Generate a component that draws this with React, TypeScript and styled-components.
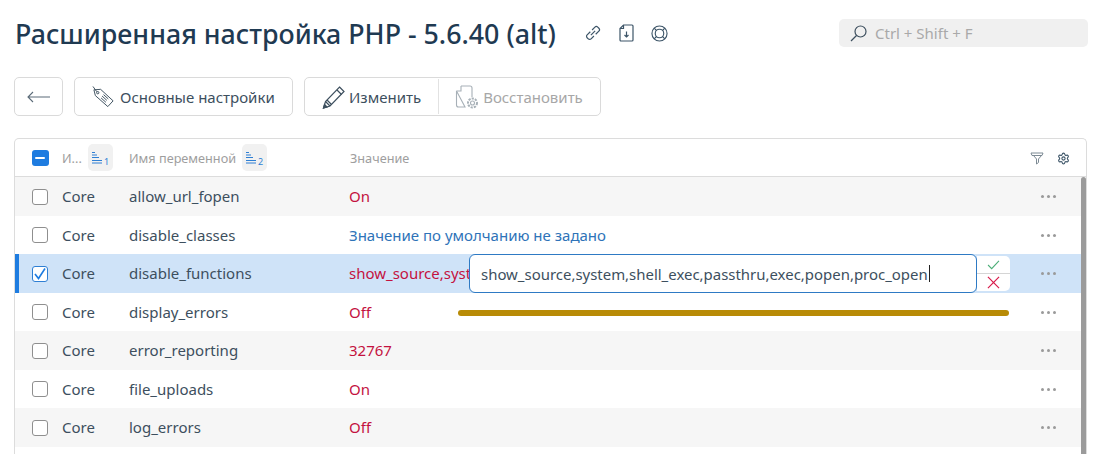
import React from "react";
import styled, { createGlobalStyle } from "styled-components";
import { Settings } from "lucide-react";

const Global = createGlobalStyle`
  html, body { margin: 0; padding: 0; height: 454px; overflow: hidden; background: #fff; }
  body { font-family: "Noto Sans", "Open Sans", "Liberation Sans", sans-serif; color: #344a5e; }
  * { box-sizing: border-box; }
`;
const Page = styled.div`
  width: 1097px; height: 454px; overflow: hidden; padding: 0 9px 0 14px;
  display: flex; flex-direction: column;
`;
const TitleRow = styled.div`
  flex: none; height: 66px; display: flex; align-items: center;
`;
const Title = styled.h1`
  margin: 0; font-size: 26.8px; font-weight: 500; color: #1f3a52; white-space: nowrap; width: 571px; padding-left: 1px;
`;
const TitleIcons = styled.div`
  display: flex; align-items: center; color: #3d5568;
`;
const DocIcon = styled.svg`
  margin-left: 18px;
`;
const RingIcon = styled.svg`
  margin-left: 17px;
`;
const Search = styled.div`
  margin-left: auto; width: 249px; height: 28px; background: #f0f0f0; border-radius: 5px;
  display: flex; align-items: center; gap: 7px; padding-left: 10px; color: #a9a9a9; font-size: 15px;
`;
const Toolbar = styled.div`
  flex: none; margin-top: 11px; height: 39px; display: flex; gap: 11px;
`;
const ButtonBox = styled.div`
  height: 39px; border: 1px solid #dadada; border-radius: 5px; background: #fff;
  display: flex; align-items: center; font-size: 15px; color: #3d4f5e;
`;
const BackBox = styled(ButtonBox)`
  width: 49px; justify-content: center;
`;
const SettingsBox = styled(ButtonBox)`
  width: 219px; padding-left: 17px; gap: 5px; white-space: nowrap;
`;
const EditBox = styled(ButtonBox)`
  width: 297px; padding-left: 17px;
`;
const PencilIcon = styled.svg`
  margin-right: 3px;
`;
const RestoreIcon = styled.svg`
  margin-right: 4px;
`;
const ActionLabel = styled.span<{ $off?: boolean }>`
  color: ${p => (p.$off ? "#a7a7a7" : "#3d4f5e")}; white-space: nowrap;
`;
const Divider = styled.div`
  width: 1px; height: 35px; background: #e2e2e2; margin: 0 16px 0 17px;
`;
const Table = styled.div`
  position: relative; margin-top: 22px; width: 1073px; flex: none; height: 316px;
  border: 1px solid #dcdcdc; border-bottom: 0; border-radius: 5px 5px 0 0; overflow: hidden;
`;
const cols = "grid-template-columns: 47px 67px 220px 1fr 70px;";
const Head = styled.div`
  height: 38px; display: grid; ${cols} align-items: center; border-bottom: 1px solid #dcdcdc;
  font-size: 12.7px; color: #9e9e9e;
`;
const HeadCell = styled.div`
  display: flex; align-items: center; gap: 6px; white-space: nowrap;
`;
const ValueHead = styled(HeadCell)`
  padding-left: 1px;
`;
const SortBadge = styled.div`
  width: 25px; height: 27px; border-radius: 5px; background: #f1f1f1; display: flex;
  align-items: center; justify-content: center; color: #2e7fd4;
`;
const HeadTools = styled.div`
  position: absolute; right: 16px; top: 11px; display: flex; gap: 13px; align-items: center; height: 16px;
`;
const Row = styled.div<{ $bg: string; $selected?: boolean }>`
  height: 38.5px; display: grid; ${cols} align-items: center; background: ${p => p.$bg};
  font-size: 15px; color: #3d4f5e; box-shadow: ${p => (p.$selected ? "inset 4px 0 0 #1e7ce0" : "none")};
  padding-right: 5px;
`;
const CheckCell = styled.div`
  display: flex; justify-content: center; padding-left: 3px;
`;
const RowCheck = styled(CheckCell)`
  margin-top: 1px;
`;
const Box = styled.div<{ $on?: boolean }>`
  width: 16px; height: 16px; border-radius: 3px; background: #fff;
  border: 1px solid ${p => (p.$on ? "#2e7fd4" : "#8f8f8f")};
  display: flex; align-items: center; justify-content: center;
`;
const MinusBox = styled.div`
  width: 17px; height: 16px; border-radius: 3px; background: #1e7ce0;
  display: flex; align-items: center; justify-content: center;
`;
const MinusBar = styled.div`
  width: 10px; height: 2px; background: #fff; border-radius: 1px;
`;
const Val = styled.div<{ $blue?: boolean }>`
  color: ${p => (p.$blue ? "#2e73b8" : "#c4123f")}; white-space: nowrap; overflow: hidden;
`;
const Dots = styled.div`
  display: flex; gap: 3px; justify-content: center; padding-left: 4px; margin-top: 1px;
`;
const Dot = styled.span`
  width: 3px; height: 3px; border-radius: 50%; background: #9a9a9a;
`;
const ScrollThumb = styled.div`
  position: absolute; right: 0; top: 38px; bottom: 0; width: 5px; background: #9b9b9b; border-radius: 3px 3px 0 0;
`;
const Editor = styled.div`
  position: absolute; left: 454px; top: 115px; width: 508px; height: 39px; background: #fff;
  border: 1px solid #2e7ac4; border-radius: 6px; display: flex; align-items: center;
  padding-left: 11px; font-size: 14.95px; color: #3d4f5e; white-space: nowrap;
`;
const Caret = styled.span`
  display: inline-block; width: 1px; height: 17px; background: #222; margin-left: 1px;
`;
const Confirm = styled.div`
  position: absolute; left: 962px; top: 117px; width: 33px; height: 35px; background: #fff;
  border-radius: 0 5px 5px 0; display: flex; flex-direction: column;
`;
const ConfirmCell = styled.div<{ $top?: boolean }>`
  flex: 1; display: flex; align-items: center; justify-content: center;
  border-bottom: ${p => (p.$top ? "1px solid #d5d5d5" : "0")};
`;
const GoldBar = styled.div`
  position: absolute; left: 443px; top: 171px; width: 551px; height: 6px; background: #b88b06; border-radius: 3px;
`;

const rows = [
  { name: "allow_url_fopen", val: "On", bg: "#f6f6f6" },
  { name: "disable_classes", val: "Значение по умолчанию не задано", blue: true, bg: "#fff" },
  { name: "disable_functions", val: "show_source,system,shell_exec,passthru,exec,popen,proc_open", bg: "#cfe3f8", sel: true },
  { name: "display_errors", val: "Off", bg: "#fff" },
  { name: "error_reporting", val: "32767", bg: "#f6f6f6" },
  { name: "file_uploads", val: "On", bg: "#fff" },
  { name: "log_errors", val: "Off", bg: "#f6f6f6" },
  { name: "", val: "", bg: "#fff" },
];

const SortIcon = ({ n }: { n: string }) => (
  <svg width="19" height="16" viewBox="0 0 19 16" fill="none" stroke="currentColor" strokeWidth="1">
    <path d="M1 2.500h3M1 5h5M1 7.500h7M1 10.500h10M1 13h10" />
    <text x="13" y="14.500" fontSize="9" fill="currentColor" stroke="none" fontFamily="Noto Sans">{n}</text>
  </svg>
);

export default function App() {
  return (
    <Page>
      <Global />
      <TitleRow>
        <Title>Расширенная настройка PHP - 5.6.40 (alt)</Title>
        <TitleIcons>
          <svg width="16" height="16" viewBox="0 0 16 16" fill="none" stroke="currentColor" strokeWidth="1.200">
            <g transform="rotate(-45 8 8)">
              <path d="M6.500 10.800H2.500a2 2 0 0 1-2-2V7.200a2 2 0 0 1 2-2H7" />
              <path d="M9.500 5.200h4a2 2 0 0 1 2 2v1.600a2 2 0 0 1-2 2H9" />
              <path d="M5 8h6" />
            </g>
          </svg>
          <DocIcon width="15" height="18" viewBox="0 0 15 18" fill="none" stroke="currentColor" strokeWidth="1.200">
            <path d="M4.500 1h8.500a1 1 0 0 1 1 1v14a1 1 0 0 1-1 1H2a1 1 0 0 1-1-1V4.500z" />
            <path d="M4.500 1v3.500H1M7.500 7.500V13M5.500 11l2 2 2-2" />
          </DocIcon>
          <RingIcon width="17" height="17" viewBox="0 0 18 18" fill="none" stroke="currentColor" strokeWidth="1.200">
            <circle cx="9" cy="9" r="8" />
            <circle cx="9" cy="9" r="4.500" />
            <path d="M3.400 3.400 5.800 5.800M14.600 3.400 12.200 5.800M3.400 14.600 5.800 12.200M14.600 14.600 12.200 12.200" />
          </RingIcon>
        </TitleIcons>
        <Search>
          <svg width="19" height="19" viewBox="0 0 19 19" fill="none" stroke="#3d4f5e" strokeWidth="1.200">
            <circle cx="11.500" cy="7.500" r="5.500" />
            <path d="M7.500 11.500 2 17" />
          </svg>
          Ctrl + Shift + F
        </Search>
      </TitleRow>
      <Toolbar>
        <BackBox>
          <svg width="24" height="12" viewBox="0 0 24 12" fill="none" stroke="#5b6b78" strokeWidth="1.100">
            <path d="M1 6h22M6 1 1 6l5 5" />
          </svg>
        </BackBox>
        <SettingsBox>
          <svg width="23" height="24" viewBox="0 0 24 24" fill="none" stroke="#3d4f5e" strokeWidth="1">
            <path d="M2 4.500 9 4l13 12-5.500 6L3.500 10.500z" />
            <circle cx="6" cy="7.500" r="1.200" />
            <path d="M1 1l4 5.500M10.500 11l5 4.500M9.500 13l5 4.500M12 9.500l5 4.500" />
          </svg>
          Основные настройки
        </SettingsBox>
        <EditBox>
          <PencilIcon width="24" height="24" viewBox="0 0 24 24" fill="none" stroke="#3d4f5e" strokeWidth="1.200">
            <path d="M17.500 2 22 6.500 8 21l-6.500 2L3.500 16.500z" />
            <path d="M5 15l4.500 4.500M15 5l4.500 4.500M3.500 16.500 8 21" />
            <path d="M1.500 23l1-3.500 2.500 2.500z" fill="#3d4f5e" />
          </PencilIcon>
          <ActionLabel>Изменить</ActionLabel>
          <Divider />
          <RestoreIcon width="24" height="26" viewBox="0 0 24 26" fill="none" stroke="#a7b0b7" strokeWidth="1.100">
            <path d="M6 2h9a2 2 0 0 1 2 2v9M10 23H3.500a2 2 0 0 1-2-2V7z" />
            <path d="M6 2v5H1.500" />
            <circle cx="17.500" cy="19" r="2" />
            <circle cx="17.500" cy="19" r="4.500" strokeDasharray="2.200 1.100" strokeWidth="2" />
          </RestoreIcon>
          <ActionLabel $off>Восстановить</ActionLabel>
        </EditBox>
      </Toolbar>
      <Table>
        <Head>
          <CheckCell><MinusBox><MinusBar /></MinusBox></CheckCell>
          <HeadCell>И...<SortBadge><SortIcon n="1" /></SortBadge></HeadCell>
          <HeadCell>Имя переменной<SortBadge><SortIcon n="2" /></SortBadge></HeadCell>
          <ValueHead>Значение</ValueHead>
          <div />
        </Head>
        <HeadTools>
          <svg width="14" height="13" viewBox="0 0 14 13" fill="none" stroke="#7d8a94" strokeWidth="1">
            <path d="M1 1h12l-1 2.500H2zM3.500 3.500l3 3.500v5l2-1.500V7l3-3.500" />
          </svg>
          <Settings size={13} color="#3d5568" strokeWidth={2} />
        </HeadTools>
        {rows.map((r, i) => (
          <Row key={i} $bg={r.bg} $selected={r.sel}>
            {r.name ? (
              <>
                <RowCheck>
                  <Box $on={r.sel}>
                    {r.sel && (
                      <svg width="14" height="14" viewBox="0 0 14 14" fill="none" stroke="#1e7ce0" strokeWidth="1.600">
                        <path d="M2 7l3.500 4.500L12 1.500" />
                      </svg>
                    )}
                  </Box>
                </RowCheck>
                <div>Core</div>
                <div>{r.name}</div>
                <Val $blue={r.blue}>{r.val}</Val>
                <Dots><Dot /><Dot /><Dot /></Dots>
              </>
            ) : null}
          </Row>
        ))}
        <ScrollThumb />
        <Editor>
          show_source,system,shell_exec,passthru,exec,popen,proc_open<Caret />
        </Editor>
        <Confirm>
          <ConfirmCell $top>
            <svg width="13" height="10" viewBox="0 0 14 11" fill="none" stroke="#4cae78" strokeWidth="1.200">
              <path d="M1 5.500 5 9.500 13 1" />
            </svg>
          </ConfirmCell>
          <ConfirmCell>
            <svg width="13" height="13" viewBox="0 0 14 14" fill="none" stroke="#d81b4b" strokeWidth="1.300">
              <path d="M1 1l12 12M13 1 1 13" />
            </svg>
          </ConfirmCell>
        </Confirm>
        <GoldBar />
      </Table>
    </Page>
  );
}
